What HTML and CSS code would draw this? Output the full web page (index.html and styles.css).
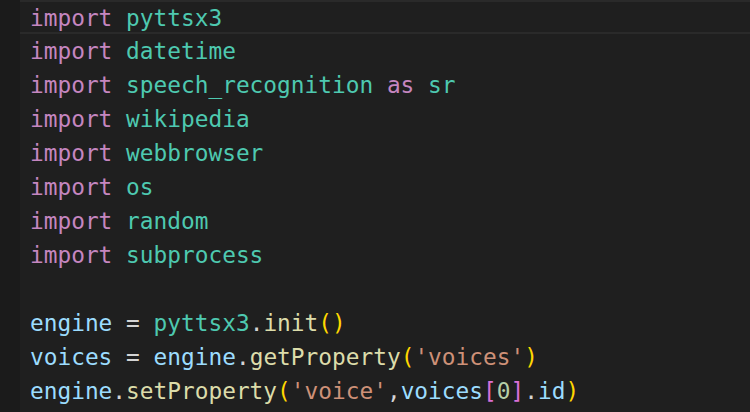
FILE: index.html
```html
<!DOCTYPE html>
<html>
<head>
<meta charset="utf-8">
<link rel="stylesheet" href="styles.css">
</head>
<body>
<div class="editor">
  <div class="gutter"></div>
  <div class="code">
    <div class="line current"><span class="kw">import</span> <span class="mod">pyttsx3</span></div>
    <div class="line"><span class="kw">import</span> <span class="mod">datetime</span></div>
    <div class="line"><span class="kw">import</span> <span class="mod">speech_recognition</span> <span class="kw">as</span> <span class="mod">sr</span></div>
    <div class="line"><span class="kw">import</span> <span class="mod">wikipedia</span></div>
    <div class="line"><span class="kw">import</span> <span class="mod">webbrowser</span></div>
    <div class="line"><span class="kw">import</span> <span class="mod">os</span></div>
    <div class="line"><span class="kw">import</span> <span class="mod">random</span></div>
    <div class="line"><span class="kw">import</span> <span class="mod">subprocess</span></div>
    <div class="line"> </div>
    <div class="line"><span class="var">engine</span> <span class="op">=</span> <span class="mod">pyttsx3</span><span class="op">.</span><span class="fn">init</span><span class="b1">()</span></div>
    <div class="line"><span class="var">voices</span> <span class="op">=</span> <span class="var">engine</span><span class="op">.</span><span class="fn">getProperty</span><span class="b1">(</span><span class="str">'voices'</span><span class="b1">)</span></div>
    <div class="line"><span class="var">engine</span><span class="op">.</span><span class="fn">setProperty</span><span class="b1">(</span><span class="str">'voice'</span><span class="op">,</span><span class="var">voices</span><span class="b2">[</span><span class="num">0</span><span class="b2">]</span><span class="op">.</span><span class="var">id</span><span class="b1">)</span></div>
  </div>
</div>
</body>
</html>
```

FILE: styles.css
```css
html, body {
  margin: 0;
  padding: 0;
  background: #1e1e1e;
}
.editor {
  display: flex;
  width: 750px;
  height: 412px;
  overflow: hidden;
  background: #1f1f1f;
}
.gutter {
  width: 20px;
  flex: none;
  background: #1b1b1b;
}
.code {
  flex: 1;
  font-family: "DejaVu Sans Mono", "Liberation Mono", monospace;
  font-size: 22.8px;
  color: #d4d4d4;
}
.line {
  height: 34px;
  line-height: 34px;
  padding-left: 10px;
  box-sizing: border-box;
  white-space: pre;
}
.line.current {
  border-top: 2px solid #2a2a2a;
  border-bottom: 2px solid #2a2a2a;
  line-height: 30px;
  padding-top: 1px;
}
.kw { color: #c586c0; }
.mod { color: #4ec9b0; }
.var { color: #9cdcfe; }
.fn { color: #dcdcaa; }
.str { color: #ce9178; }
.op { color: #d4d4d4; }
.b1 { color: #ffd700; }
.b2 { color: #da70d6; }
.num { color: #b5cea8; }
```
